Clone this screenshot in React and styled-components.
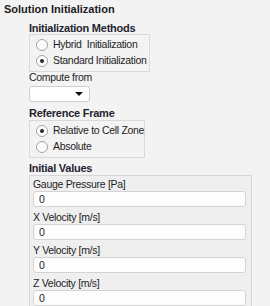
import React from "react";
import styled, { createGlobalStyle } from "styled-components";

const GlobalStyle = createGlobalStyle`
  html, body {
    margin: 0;
    padding: 0;
    background: #f3f3f3;
  }
  body {
    font-family: "Liberation Sans", Arial, sans-serif;
    font-size: 10.5px;
    letter-spacing: -0.3px;
    color: #1e1e1e;
  }
`;

const Page = styled.div`
  width: 270px;
  height: 306px;
  overflow: hidden;
  background: #f3f3f3;
`;

const Title = styled.div`
  font-weight: bold;
  font-size: 11px;
  letter-spacing: 0;
  color: #1a1a22;
  padding: 3px 0 0 4px;
  height: 16px;
  line-height: 12px;
`;

const Body = styled.div`
  padding-left: 29px;
  display: flex;
  flex-direction: column;
`;

const Heading = styled.div`
  font-weight: bold;
  font-size: 11px;
  letter-spacing: -0.25px;
  color: #1f2330;
  line-height: 12px;
  height: 12px;
  margin-top: ${(p) => p.$top || 0}px;
`;

const Group = styled.div`
  width: ${(p) => p.$width}px;
  height: 38px;
  margin-top: ${(p) => p.$top || 0}px;
  border: 1px solid #d9d9d9;
  box-sizing: border-box;
  padding: 4px 0 0 6px;
  display: flex;
  flex-direction: column;
  gap: 5px;
`;

const Option = styled.label`
  display: flex;
  align-items: center;
  gap: 5px;
  height: 11px;
  line-height: 11px;
  white-space: pre;
`;

const Circle = styled.span`
  width: 10px;
  height: 10px;
  border-radius: 50%;
  border: 1px solid #a4a4a4;
  background: #fdfdfd;
  display: flex;
  align-items: center;
  justify-content: center;
  flex-shrink: 0;
  &::after {
    content: "";
    width: 4px;
    height: 4px;
    border-radius: 50%;
    background: ${(p) => (p.$on ? "#262626" : "transparent")};
  }
`;

const Label = styled.div`
  line-height: 12px;
  height: 12px;
  margin-top: ${(p) => p.$top || 0}px;
`;

const Select = styled.div`
  width: 61px;
  height: 16px;
  margin-top: 3px;
  box-sizing: border-box;
  border: 1px solid #cfcfcf;
  border-radius: 3px;
  background: #ffffff;
  display: flex;
  align-items: center;
  justify-content: flex-end;
  padding-right: 6px;
`;

const Arrow = styled.span`
  width: 0;
  height: 0;
  border-left: 4px solid transparent;
  border-right: 4px solid transparent;
  border-top: 4px solid #111;
`;

const Panel = styled.div`
  width: 223px;
  height: 140px;
  margin-top: 1px;
  box-sizing: border-box;
  border: 1px solid #d6d6d6;
  border-bottom: none;
  background: #efefef;
  padding: 2px 0 0 3px;
  display: flex;
  flex-direction: column;
`;

const Field = styled.div`
  display: flex;
  flex-direction: column;
  margin-bottom: 4px;
`;

const Input = styled.div`
  width: 213px;
  height: 16px;
  margin-top: 1px;
  box-sizing: border-box;
  border: 1px solid #d3d3d3;
  border-radius: 3px;
  background: #fdfdfd;
  padding-left: 5px;
  line-height: 14px;
`;

const fields = ["Gauge Pressure [Pa]", "X Velocity [m/s]", "Y Velocity [m/s]", "Z Velocity [m/s]"];

export default function App() {
  return (
    <Page>
      <GlobalStyle />
      <Title>Solution Initialization</Title>
      <Body>
        <Heading $top={3}>Initialization Methods</Heading>
        <Group $width={121}>
          <Option>
            <Circle />
            Hybrid  Initialization
          </Option>
          <Option>
            <Circle $on />
            Standard Initialization
          </Option>
        </Group>
        <Label $top={-1}>Compute from</Label>
        <Select>
          <Arrow />
        </Select>
        <Heading $top={5}>Reference Frame</Heading>
        <Group $width={116} $top={1}>
          <Option>
            <Circle $on />
            Relative to Cell Zone
          </Option>
          <Option>
            <Circle />
            Absolute
          </Option>
        </Group>
        <Heading $top={4}>Initial Values</Heading>
        <Panel>
          {fields.map((f) => (
            <Field key={f}>
              <Label>{f}</Label>
              <Input>0</Input>
            </Field>
          ))}
        </Panel>
      </Body>
    </Page>
  );
}
